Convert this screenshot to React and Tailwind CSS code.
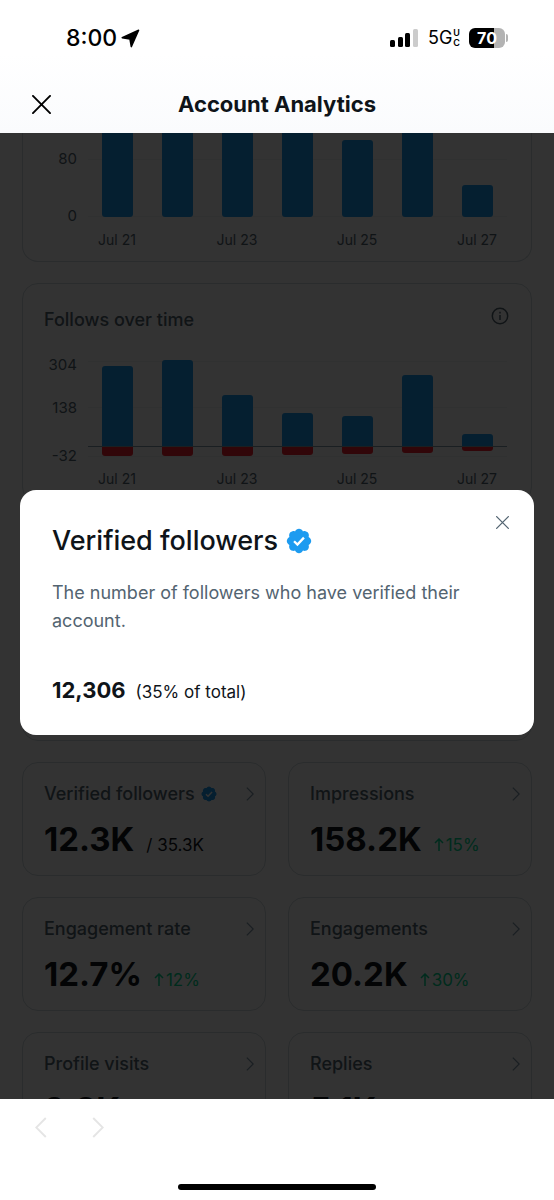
import { useState } from 'react'

const LABELS = ['Jul 21', '', 'Jul 23', '', 'Jul 25', '', 'Jul 27'];

const FOLLOWS = [
    { up: 81, down: 9 },
    { up: 87, down: 9 },
    { up: 52, down: 9 },
    { up: 34, down: 8 },
    { up: 31, down: 7 },
    { up: 72, down: 6 },
    { up: 13, down: 4 },
];

const IMPRESSIONS = [120, 110, 100, 96, 77, 104, 32];

const METRICS = [
    { title: 'Verified followers', value: '12.3K', total: '/ 35.3K', verified: true },
    { title: 'Impressions', value: '158.2K', change: '15%' },
    { title: 'Engagement rate', value: '12.7%', change: '12%' },
    { title: 'Engagements', value: '20.2K', change: '30%' },
    { title: 'Profile visits', value: '9.2K' },
    { title: 'Replies', value: '5.1K' },
];

const VerifiedBadge = ({ className }) => (
    <svg viewBox="1 1 20 20" className={className} aria-hidden="true">
        <path
            fill="#1d9bf0"
            d="M20.396 11c-.018-.646-.215-1.275-.57-1.816-.354-.54-.852-.972-1.438-1.246.223-.607.27-1.264.14-1.897-.131-.634-.437-1.218-.882-1.687-.47-.445-1.053-.75-1.687-.882-.633-.13-1.29-.083-1.897.14-.273-.587-.704-1.086-1.245-1.44S11.647 1.62 11 1.604c-.646.017-1.273.213-1.813.568s-.969.854-1.24 1.44c-.608-.223-1.267-.272-1.902-.14-.635.13-1.22.436-1.69.882-.445.47-.749 1.055-.878 1.688-.13.633-.08 1.29.144 1.896-.587.274-1.087.705-1.443 1.245-.356.54-.555 1.17-.574 1.817.02.647.218 1.276.574 1.817.356.54.856.972 1.443 1.245-.224.606-.274 1.263-.144 1.896.13.634.433 1.218.877 1.688.47.443 1.054.747 1.687.878.633.132 1.29.084 1.897-.136.274.586.705 1.084 1.246 1.439.54.354 1.17.551 1.816.569.647-.016 1.276-.213 1.817-.567s.972-.854 1.245-1.44c.604.239 1.266.296 1.903.164.636-.132 1.22-.447 1.68-.907.46-.46.776-1.044.908-1.681s.075-1.299-.165-1.903c.586-.274 1.084-.705 1.439-1.246.354-.54.551-1.17.569-1.816z"
        />
        <path d="M7.2 11.2l2.600 2.500 5-5.300" fill="none" stroke="#fff" strokeWidth="1.800" />
    </svg>
);

const Cross = ({ className }) => (
    <svg viewBox="0 0 20 20" className={className} fill="none" stroke="currentColor" strokeLinecap="round" aria-hidden="true">
        <path d="M1 1l18 18M19 1L1 19" />
    </svg>
);

const Chevron = ({ className }) => (
    <svg viewBox="0 0 12 22" className={className} fill="none" stroke="currentColor" aria-hidden="true">
        <path d="M1 1l10 10L1 21" />
    </svg>
);

const StatusBar = () => (
    <div className="flex h-[76px] items-center justify-between pl-[66px] pr-[46px]">
        <div className="flex items-center gap-1 text-[23px] font-medium">
            8:00
            <svg viewBox="0 0 19 19" className="h-[19px] w-[19px]" stroke="#000" strokeWidth="1.500" strokeLinejoin="round" aria-hidden="true">
                <path d="M1.200 8.700L17.600 1.200L10.300 17.600L9 10z" />
            </svg>
        </div>
        <div className="flex items-center">
            <svg viewBox="0 0 28 18" className="h-[18px] w-7" aria-hidden="true">
                <rect x="0" y="11" width="5" height="7" rx="1.500" />
                <rect x="8" y="8" width="5" height="10" rx="1.500" />
                <rect x="15" y="4" width="5" height="14" rx="1.500" />
                <rect x="23" y="0" width="5" height="18" rx="1.500" fill="#ccc" />
            </svg>
            <div className="ml-[10px] flex items-center text-lg">
                5G
                <span className="ml-px flex flex-col text-[9px] leading-[10px] font-semibold">
                    <span>U</span>
                    <span>C</span>
                </span>
            </div>
            <div className="ml-[9px] flex items-center gap-px">
                <div className="flex h-5 w-9 items-center justify-center rounded-md bg-linear-to-r from-black from-70% to-[#b3b3b3] to-70% text-base font-bold text-white">
                    70
                </div>
                <div className="h-2 w-[2px] rounded-r bg-[#b3b3b3]"></div>
            </div>
        </div>
    </div>
);

const AxisLabels = ({ y }) => LABELS.map((label, i) => (
    <text key={i} x={94 + i * 60} y={y} textAnchor="middle" fill="#536471" className="text-sm">{label}</text>
));

const ImpressionsChart = () => (
    <svg viewBox="0 0 508 128" className="block w-full text-[15px]" role="img" aria-label="80, 0">
        <path d="M65 26.500h419M65 83.500h419" stroke="#eff3f4" />
        <g textAnchor="end" fill="#536471">
            <text x="54" y="31">80</text>
            <text x="54" y="88">0</text>
        </g>
        {IMPRESSIONS.map((h, i) => (
            <rect key={i} x={79 + i * 60} y={84 - h} width="31" height={h} rx="3" fill="#1d9bf0" />
        ))}
        <AxisLabels y={112} />
    </svg>
);

const FollowsChart = () => (
    <svg viewBox="0 0 508 164" className="block w-full text-[15px]" role="img" aria-label="Follows over time">
        <path d="M65 23.500h419M65 69.500h419M65 118.500h419" stroke="#eff3f4" />
        <g textAnchor="end" fill="#536471">
            <text x="54" y="32">304</text>
            <text x="54" y="75">138</text>
            <text x="54" y="123">-32</text>
        </g>
        {FOLLOWS.map((d, i) => (
            <g key={i}>
                <path
                    fill="#1d9bf0"
                    d={`M${79 + i * 60} 109v${3 - d.up}q0-3 3-3h25q3 0 3 3v${d.up - 3}z`}
                />
                <path
                    fill="#f4212e"
                    d={`M${79 + i * 60} 109v${d.down - 3}q0 3 3 3h25q3 0 3-3v${3 - d.down}z`}
                />
            </g>
        ))}
        <path d="M65 108.500h419" stroke="#829aab" />
        <AxisLabels y={146} />
    </svg>
);

const MetricCard = ({ title, value, total, change, verified }) => (
    <button type="button" className="flex h-[114px] flex-col rounded-2xl border border-[#cfd9de] pt-[19px] pr-[11px] pl-[21px] text-left">
        <span className="flex w-full items-center justify-between text-[#536471]">
            <span className="flex items-center gap-[6px] text-lg leading-6 font-medium">
                {title}
                {verified && <VerifiedBadge className="h-4 w-4" />}
            </span>
            <Chevron className="h-[14px] w-2 stroke-2 text-[#829aab]" />
        </span>
        <span className="mt-[13px] flex items-baseline gap-3 leading-10">
            <span className="text-[33px] font-bold text-[#0f1419]">{value}</span>
            {total && <span className="text-[17px] text-[#0f1419]">{total}</span>}
            {change && (
                <span className="flex items-baseline gap-[2px] text-[17px] text-[#00d890]">
                    <svg viewBox="0 0 10 13" className="h-[13px] w-[10px]" fill="none" stroke="currentColor" strokeWidth="1.500" aria-hidden="true">
                        <path d="M5 13V1M1 5l4-4 4 4" />
                    </svg>
                    {change}
                </span>
            )}
        </span>
    </button>
);

const VerifiedDialog = ({ onClose }) => (
    <div className="absolute inset-0 flex items-center justify-center bg-black/80 px-5 pb-[7px]">
        <div role="dialog" aria-labelledby="dialog-title" className="relative w-full rounded-2xl bg-white px-8 pt-[31px] pb-7">
            <button type="button" aria-label="Close" onClick={onClose} className="absolute top-[26px] right-[25px] text-[#536471]">
                <Cross className="h-[13px] w-[13px] stroke-2" />
            </button>
            <h2 id="dialog-title" className="flex items-center gap-2 text-[27px] leading-10 font-medium text-[#0f1419]">
                Verified followers
                <VerifiedBadge className="h-[26px] w-[26px]" />
            </h2>
            <p className="mt-[18px] text-lg leading-7 text-[#536471]">
                The number of followers who have verified their account.
            </p>
            <p className="mt-10 flex items-baseline gap-[10px] leading-[30px] text-[#0f1419]">
                <span className="text-[22px] font-bold">12,306</span>
                <span className="text-[17px]">(35% of total)</span>
            </p>
        </div>
    </div>
);

const App = () => {
    const [open, setOpen] = useState(true);

    return (
        <div className="flex h-screen flex-col bg-white font-['Inter',sans-serif] text-black">
            <header className="shrink-0 bg-linear-to-b from-white from-40% to-[#fafbfd]">
                <StatusBar />
                <div className="grid h-[57px] grid-cols-[1fr_auto_1fr] items-center px-8">
                    <button type="button" aria-label="Close analytics" className="w-5">
                        <Cross className="h-[19px] w-[19px] stroke-2" />
                    </button>
                    <h1 className="text-[22px] font-bold text-[#0f1419]">Account Analytics</h1>
                </div>
            </header>

            <main className="relative min-h-0 flex-1 overflow-hidden">
                <div className="flex flex-col gap-[21px] px-[22px]">
                    <section className="rounded-b-2xl border-x border-b border-[#cfd9de]">
                        <ImpressionsChart />
                    </section>

                    <section className="rounded-2xl border border-[#cfd9de]">
                        <div className="flex items-center justify-between pt-[22px] pr-[22px] pb-1 pl-[21px]">
                            <h2 className="text-lg leading-7 font-medium text-[#536471]">Follows over time</h2>
                            <button type="button" aria-label="About follows" className="mb-2 text-[#536471]">
                                <svg viewBox="0 0 18 18" className="h-[18px] w-[18px]" fill="none" stroke="currentColor" strokeWidth="1.500" aria-hidden="true">
                                    <circle cx="9" cy="9" r="7.700" />
                                    <path d="M9 8v5M9 4.800v1.700" />
                                </svg>
                            </button>
                        </div>
                        <FollowsChart />
                    </section>

                    <section className="h-[217px] rounded-2xl border border-[#cfd9de]"></section>

                    <div className="grid grid-cols-2 gap-x-[22px] gap-y-[21px]">
                        {METRICS.map((metric) => (
                            <MetricCard key={metric.title} {...metric} />
                        ))}
                    </div>
                </div>
                {open && <VerifiedDialog onClose={() => setOpen(false)} />}
            </main>

            <footer className="relative flex h-[101px] shrink-0 flex-col justify-between bg-white pt-[18px] pb-[10px]">
                <nav className="flex gap-[45px] px-[35px] text-[#e5e5e5]">
                    <button type="button" aria-label="Back">
                        <Chevron className="h-[21px] w-3 rotate-180 stroke-2" />
                    </button>
                    <button type="button" aria-label="Forward">
                        <Chevron className="h-[21px] w-3 stroke-2" />
                    </button>
                </nav>
                <div className="mx-auto h-[6px] w-[198px] rounded-full bg-black"></div>
            </footer>
        </div>
    );
};

export default App;
